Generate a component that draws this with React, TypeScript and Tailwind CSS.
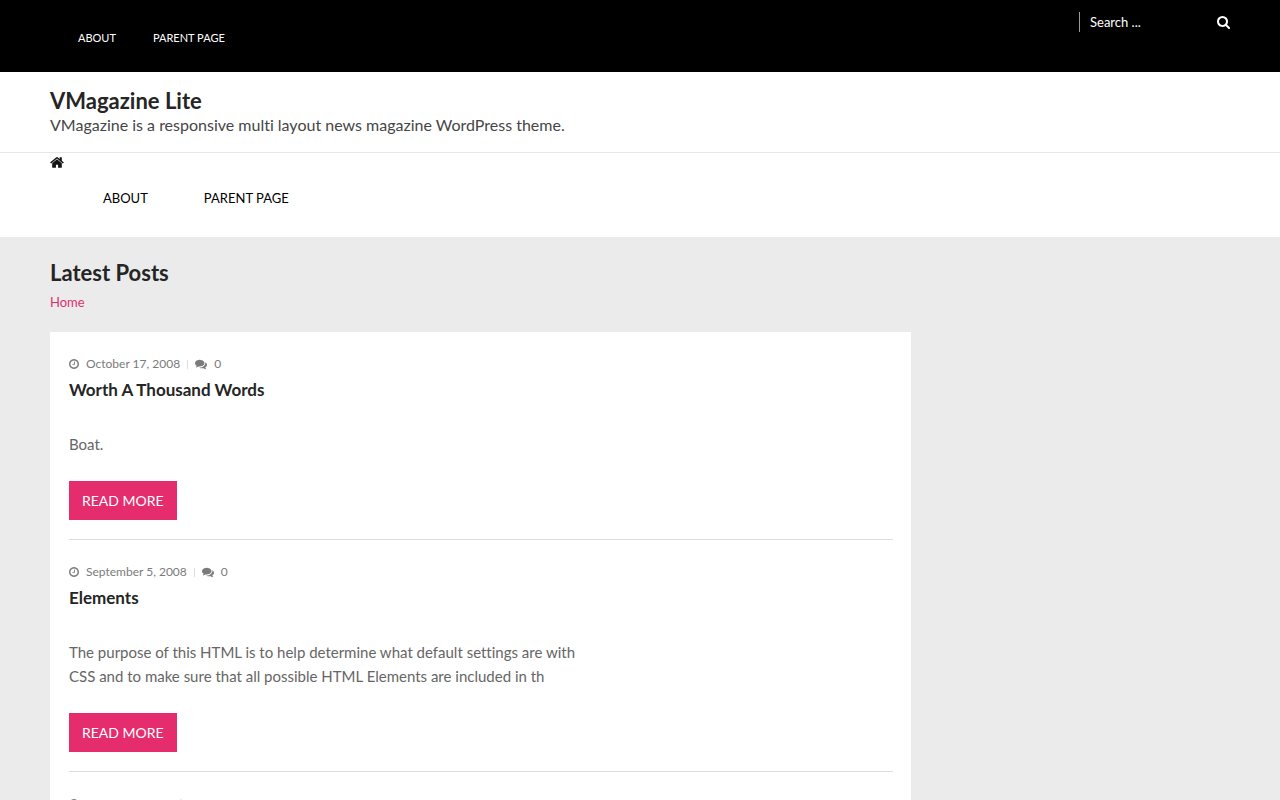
import { useState } from 'react';

interface Post {
  id: number;
  date: string;
  comments: number;
  title: string;
  excerpt: string;
}

const menu = ['About', 'Parent Page'];

const posts: Post[] = [
  { id: 1, date: 'October 17, 2008', comments: 0, title: 'Worth A Thousand Words', excerpt: 'Boat.' },
  {
    id: 2,
    date: 'September 5, 2008',
    comments: 0,
    title: 'Elements',
    excerpt:
      'The purpose of this HTML is to help determine what default settings are with CSS and to make sure that all possible HTML Elements are included in th',
  },
  { id: 3, date: 'June 21, 2008', comments: 0, title: 'More Tag', excerpt: 'This content is before the more tag.' },
];

function HomeIcon() {
  return (
    <svg viewBox="64 0 1664 1792" className="h-[15px] w-[14px]" fill="currentColor" aria-hidden="true">
      <path d="M1472 992v480q0 26-19 45t-45 19h-384v-384h-256v384h-384q-26 0-45-19t-19-45v-480q0-1 .5-3t.5-3l575-474 575 474q1 2 1 6zm223-69l-62 74q-8 9-21 11h-3q-13 0-21-7l-692-577-692 577q-12 8-24 7-13-2-21-11l-62-74q-8-10-7-23.5t11-21.5l719-599q32-26 76-26t76 26l244 204v-195q0-14 9-23t23-9h192q14 0 23 9t9 23v408l219 182q10 8 11 21.5t-7 23.5z" />
    </svg>
  );
}

function SearchIcon() {
  return (
    <svg viewBox="64 128 1664 1664" className="size-[13px]" fill="currentColor" aria-hidden="true">
      <path d="M1216 832q0-185-131.5-316.5t-316.5-131.5-316.5 131.5-131.5 316.5 131.5 316.5 316.5 131.5 316.5-131.5 131.5-316.5zm512 832q0 52-38 90t-90 38q-54 0-90-38l-343-342q-179 124-399 124-143 0-273.5-55.5t-225-150-150-225-55.5-273.5 55.5-273.5 150-225 225-150 273.5-55.5 273.5 55.5 225 150 150 225 55.5 273.5q0 220-124 399l343 343q37 37 37 90z" />
    </svg>
  );
}

function ClockIcon() {
  return (
    <svg viewBox="128 0 1536 1792" className="h-3 w-[10px]" fill="currentColor" aria-hidden="true">
      <path d="M1024 544v448q0 14-9 23t-23 9h-320q-14 0-23-9t-9-23v-64q0-14 9-23t23-9h224v-352q0-14 9-23t23-9h64q14 0 23 9t9 23zm416 352q0-148-73-273t-198-198-273-73-273 73-198 198-73 273 73 273 198 198 273 73 273-73 198-198 73-273zm224 0q0 209-103 385.5t-279.5 279.5-385.5 103-385.5-103-279.5-279.5-103-385.5 103-385.5 279.5-279.5 385.5-103 385.5 103 279.5 279.5 103 385.5z" />
    </svg>
  );
}

function CommentsIcon() {
  return (
    <svg viewBox="0 0 1792 1792" className="size-3" fill="currentColor" aria-hidden="true">
      <path d="M1408 768q0 139-94 257t-256.5 186.5-353.5 68.5q-86 0-176-16-124 88-278 128-36 9-86 16h-3q-11 0-20.5-8t-11.5-21q-1-3-1-6.5t.5-6.5 2-6l2.5-5 3.5-5.5 4-5 4.5-5 4-4.5q5-6 23-25t26-29.5 22.5-29 25-38.5 20.5-44q-124-72-195-177t-71-224q0-139 94-257t256.5-186.5 353.5-68.5 353.5 68.5 256.5 186.5 94 257zm384 256q0 120-71 224.5t-195 176.5q10 24 20.5 44t25 38.5 22.5 29 26 29.5 23 25q1 1 4 4.5t4.5 5 4 5 3.5 5.5l2.5 5 2 6 .5 6.5-1 6.5q-3 14-13 22t-22 7q-50-7-86-16-154-40-278-128-90 16-176 16-271 0-472-132 58 4 88 4 161 0 309-45t264-129q125-92 192-212t67-254q0-77-23-152 129 71 204 178t75 230z" />
    </svg>
  );
}

function PostItem({ post }: { post: Post }) {
  return (
    <article className="border-b border-[#dddddd] pt-5 pb-[19px]">
      <div className="flex h-6 items-center text-xs text-[#7b7b7b]">
        <a href="#" className="flex items-center gap-[7px]">
          <ClockIcon />
          {post.date}
        </a>
        <span className="mx-[7px] h-[9px] w-px bg-[#dddddd]" />
        <a href="#" className="flex items-center gap-[7px]">
          <CommentsIcon />
          {post.comments}
        </a>
      </div>
      <h2 className="text-[17px] leading-7 font-bold text-[#252525]">
        <a href="#">{post.title}</a>
      </h2>
      <p className="mt-7 max-w-[520px] text-[15px] leading-6 text-[#666666]">{post.excerpt}</p>
      <div className="mt-[25px] flex">
        <a href="#" className="bg-[#e52d6d] px-[13px] text-sm leading-[39px] text-white uppercase">
          Read More
        </a>
      </div>
    </article>
  );
}

export default function App() {
  const [query, setQuery] = useState('');

  return (
    <div className="min-h-screen bg-[#ebebeb] font-['Lato',sans-serif] [font-variant-ligatures:none]">
      {/* top bar */}
      <div className="flex items-start justify-between bg-black px-[50px] pt-3 pb-4 text-white">
        <nav aria-label="Top" className="pt-2 pl-7">
          <ul className="flex gap-[37px] text-[11px] leading-9 uppercase">
            {menu.map((item) => (
              <li key={item}>
                <a href="#">{item}</a>
              </li>
            ))}
          </ul>
        </nav>
        <form className="flex h-5 w-[151px] items-center border-l border-[#999999]" onSubmit={(e) => e.preventDefault()}>
          <input
            type="search"
            aria-label="Search"
            placeholder="Search ..."
            value={query}
            onChange={(e) => setQuery(e.target.value)}
            className="min-w-0 flex-1 px-[10px] text-[13px] leading-5 outline-none placeholder:text-white"
          />
          <button type="submit" aria-label="Submit search">
            <SearchIcon />
          </button>
        </form>
      </div>

      <header className="bg-white">
        <div className="border-b border-[#e6e6e6] px-[50px] pt-4 pb-4">
          <h1 className="text-[22px] leading-[26px] font-bold text-[#252525]">
            <a href="#">VMagazine Lite</a>
          </h1>
          <p className="text-base leading-[22px] text-[#464646]">
            VMagazine is a responsive multi layout news magazine WordPress theme.
          </p>
        </div>
        <nav aria-label="Main" className="px-[50px] pt-[2px] pb-5 text-black">
          <a href="#" aria-label="Home page" className="block text-[#151515]">
            <HomeIcon />
          </a>
          <ul className="flex gap-14 pt-[10px] pl-[53px] text-[13px] leading-[37px] uppercase">
            {menu.map((item) => (
              <li key={item}>
                <a href="#">{item}</a>
              </li>
            ))}
          </ul>
        </nav>
      </header>

      <main className="px-[50px] pt-5">
        <h1 className="text-[22px] leading-8 font-bold text-[#252525]">Latest Posts</h1>
        <nav aria-label="Breadcrumb" className="pt-[3px] pb-5 text-[13px] leading-5 text-[#e52d6d]">
          <a href="#">Home</a>
        </nav>
        <div className="w-[73%] bg-white pr-[18px] pl-[19px]">
          {posts.map((post) => (
            <PostItem key={post.id} post={post} />
          ))}
        </div>
      </main>
    </div>
  );
}
